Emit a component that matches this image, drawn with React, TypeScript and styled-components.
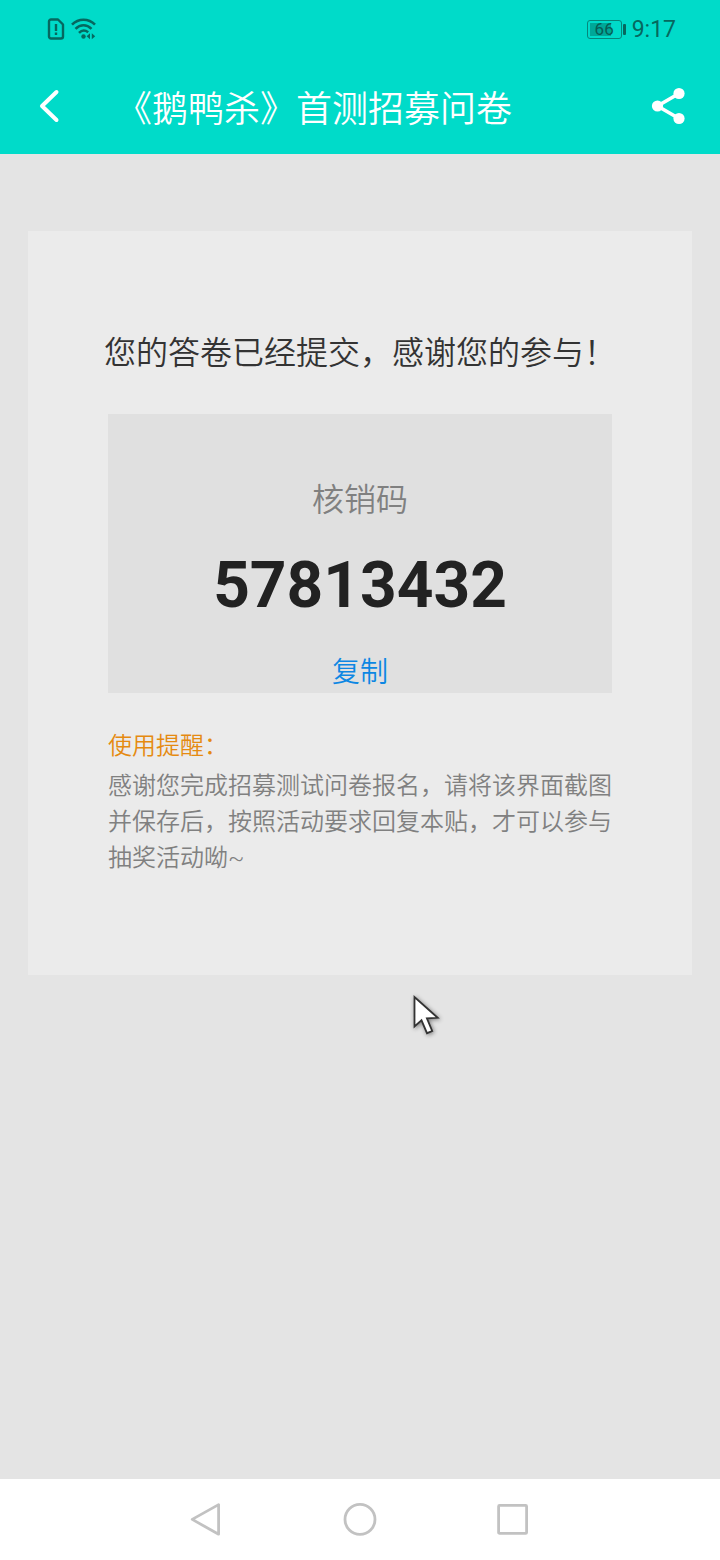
import React from 'react';
import styled, { createGlobalStyle } from 'styled-components';

const GlobalStyle = createGlobalStyle`
  * { box-sizing: border-box; }
  body {
    margin: 0;
    background: #e4e4e4;
    font-family: Roboto, "Noto Sans CJK SC", sans-serif;
  }
  h1, h2, p { margin: 0; font-weight: 350; }
  button { border: 0; padding: 0; background: none; font: inherit; cursor: pointer; }
  svg { display: block; }
`;

const Screen = styled.div`
  position: relative;
  display: flex;
  flex-direction: column;
  min-height: 100vh;
`;

const TopArea = styled.header`
  background: #00dbc9;
`;

const StatusBar = styled.div`
  display: flex;
  align-items: center;
  justify-content: space-between;
  height: 58px;
  padding: 0 44px 0 47px;
  color: #06685f;
`;

const StatusGroup = styled.div`
  display: flex;
  align-items: center;
  gap: 6px;
`;

const Battery = styled.div`
  display: flex;
  align-items: center;
  gap: 1px;
`;

const BatteryBody = styled.span`
  width: 35px;
  height: 19px;
  border: 1px solid #06877b;
  border-radius: 3px;
  background: linear-gradient(#00a798, #00a798) 2px 2px / 21px 13px no-repeat;
  color: #075c54;
  font-size: 17px;
  line-height: 17px;
  text-align: center;
`;

const BatteryTip = styled.span`
  width: 3px;
  height: 11px;
  border-radius: 1px;
  background: #06685f;
`;

const Clock = styled.time`
  padding-top: 2px;
  font-size: 23px;
  line-height: 28px;
`;

const TitleBar = styled.div`
  display: flex;
  align-items: center;
  height: 96px;
  padding: 0 34px 0 38px;
`;

const Title = styled.h1`
  flex: 1;
  margin-left: 54px;
  padding-top: 8px;
  color: #ffffff;
  font-size: 36px;
  line-height: 52px;
`;

const IconButton = styled.button`
  flex: none;
  color: #ffffff;
`;

const Content = styled.main`
  flex: 1;
  padding: 77px 28px;
`;

const Card = styled.section`
  padding: 98px 76px 99px;
  background: #ebebeb;
`;

const Thanks = styled.h2`
  color: #333333;
  font-size: 32px;
  line-height: 48px;
  text-align: center;
`;

const CodePanel = styled.div`
  display: flex;
  flex-direction: column;
  align-items: center;
  margin: 37px 4px 0;
  padding-top: 62px;
  background: #e0e0e0;
`;

const CodeLabel = styled.p`
  color: #808080;
  font-size: 32px;
  line-height: 48px;
`;

const Code = styled.p`
  margin-top: 24px;
  color: #222222;
  font-size: 64px;
  font-weight: 700;
  line-height: 76px;
`;

const CopyButton = styled.button`
  && {
    margin-top: 29px;
    color: #0d87e3;
    font-size: 28px;
    font-weight: 350;
    line-height: 40px;
  }
`;

const Notice = styled.div`
  margin: 35px 4px 0;
  color: #808080;
  font-size: 24px;
  line-height: 36px;
`;

const NoticeTitle = styled.p`
  && { margin-bottom: 4px; }
  color: #e58a10;
`;

const NavBar = styled.nav`
  display: flex;
  align-items: center;
  justify-content: center;
  gap: 118px;
  height: 81px;
  background: #ffffff;
`;

const Pointer = styled.svg`
  position: absolute;
  top: 990px;
  left: 408px;
  filter: drop-shadow(1px 1px 2px rgba(0, 0, 0, 0.45));
`;

const SimIcon = () => (
  <svg width="18" height="22" viewBox="0 0 18 22" fill="none" stroke="currentColor" strokeWidth="2.4" aria-hidden="true">
    <path d="M4 1.500h7l5 5V18.500a2 2 0 0 1-2 2H4a2 2 0 0 1-2-2V3.500a2 2 0 0 1 2-2Z" strokeLinejoin="round" />
    <path d="M9 6v7M9 14.500v2.500" />
  </svg>
);

const WifiIcon = () => (
  <svg width="26" height="22" viewBox="0 0 26 22" fill="none" stroke="currentColor" strokeWidth="2.6" aria-hidden="true">
    <path d="M1 6.700C7.500 .1 17.500 .1 24 6.700M4.500 10.800c4.800-4.800 11.200-4.800 16 0M8 14.800c3-3 6-3 9.200-.5" />
    <circle cx="12.500" cy="18.500" r="2.200" fill="currentColor" stroke="none" />
    <path d="M19 15.200v6l-3.400-3ZM20.800 15.200v6l3.400-3Z" fill="currentColor" stroke="none" />
  </svg>
);

const BackIcon = () => (
  <svg width="24" height="36" viewBox="0 0 24 36" fill="none" stroke="currentColor" strokeWidth="4" strokeLinecap="round" strokeLinejoin="round" aria-hidden="true">
    <path d="M18.500 4 4 18l14.500 14" />
  </svg>
);

const ShareIcon = () => (
  <svg width="36" height="38" viewBox="0 0 36 38" fill="currentColor" aria-hidden="true">
    <path d="M29 6.500 7.500 19 29 31.500" fill="none" stroke="currentColor" strokeWidth="3.600" />
    <circle cx="29" cy="6.500" r="5.600" />
    <circle cx="7.500" cy="19" r="5.600" />
    <circle cx="29" cy="31.500" r="5.600" />
  </svg>
);

interface NavIconProps {
  children: React.ReactNode;
}

const NavIcon = ({ children }: NavIconProps) => (
  <svg width="36" height="36" viewBox="0 0 36 36" fill="none" stroke="#c2c2c2" strokeWidth="2.800" strokeLinejoin="round" aria-hidden="true">
    {children}
  </svg>
);

export default function App() {
  return (
    <Screen>
      <GlobalStyle />
      <TopArea>
        <StatusBar>
          <StatusGroup>
            <SimIcon />
            <WifiIcon />
          </StatusGroup>
          <StatusGroup>
            <Battery>
              <BatteryBody>66</BatteryBody>
              <BatteryTip />
            </Battery>
            <Clock>9:17</Clock>
          </StatusGroup>
        </StatusBar>
        <TitleBar>
          <IconButton type="button" aria-label="返回"><BackIcon /></IconButton>
          <Title>《鹅鸭杀》首测招募问卷</Title>
          <IconButton type="button" aria-label="分享"><ShareIcon /></IconButton>
        </TitleBar>
      </TopArea>
      <Content>
        <Card>
          <Thanks>您的答卷已经提交，感谢您的参与！</Thanks>
          <CodePanel>
            <CodeLabel>核销码</CodeLabel>
            <Code>57813432</Code>
            <CopyButton type="button">复制</CopyButton>
          </CodePanel>
          <Notice>
            <NoticeTitle>使用提醒：</NoticeTitle>
            <p>感谢您完成招募测试问卷报名，请将该界面截图并保存后，按照活动要求回复本贴，才可以参与抽奖活动呦~</p>
          </Notice>
        </Card>
      </Content>
      <NavBar>
        <IconButton type="button" aria-label="后退">
          <NavIcon><path d="M30.600 2.600v29.600L4.200 17.400Z" /></NavIcon>
        </IconButton>
        <IconButton type="button" aria-label="主页">
          <NavIcon><circle cx="18" cy="17.400" r="15" /></NavIcon>
        </IconButton>
        <IconButton type="button" aria-label="最近任务">
          <NavIcon><rect x="2.600" y="3.400" width="28" height="28" rx="1" /></NavIcon>
        </IconButton>
      </NavBar>
      <Pointer width="36" height="48" viewBox="0 0 36 48" aria-hidden="true">
        <path d="M6.500 7v29.500l7-6.200 5.500 12.900 5.200-2.200-5.300-12.600 10.800-.6Z" fill="#ffffff" stroke="#333333" strokeWidth="1.800" />
      </Pointer>
    </Screen>
  );
}
